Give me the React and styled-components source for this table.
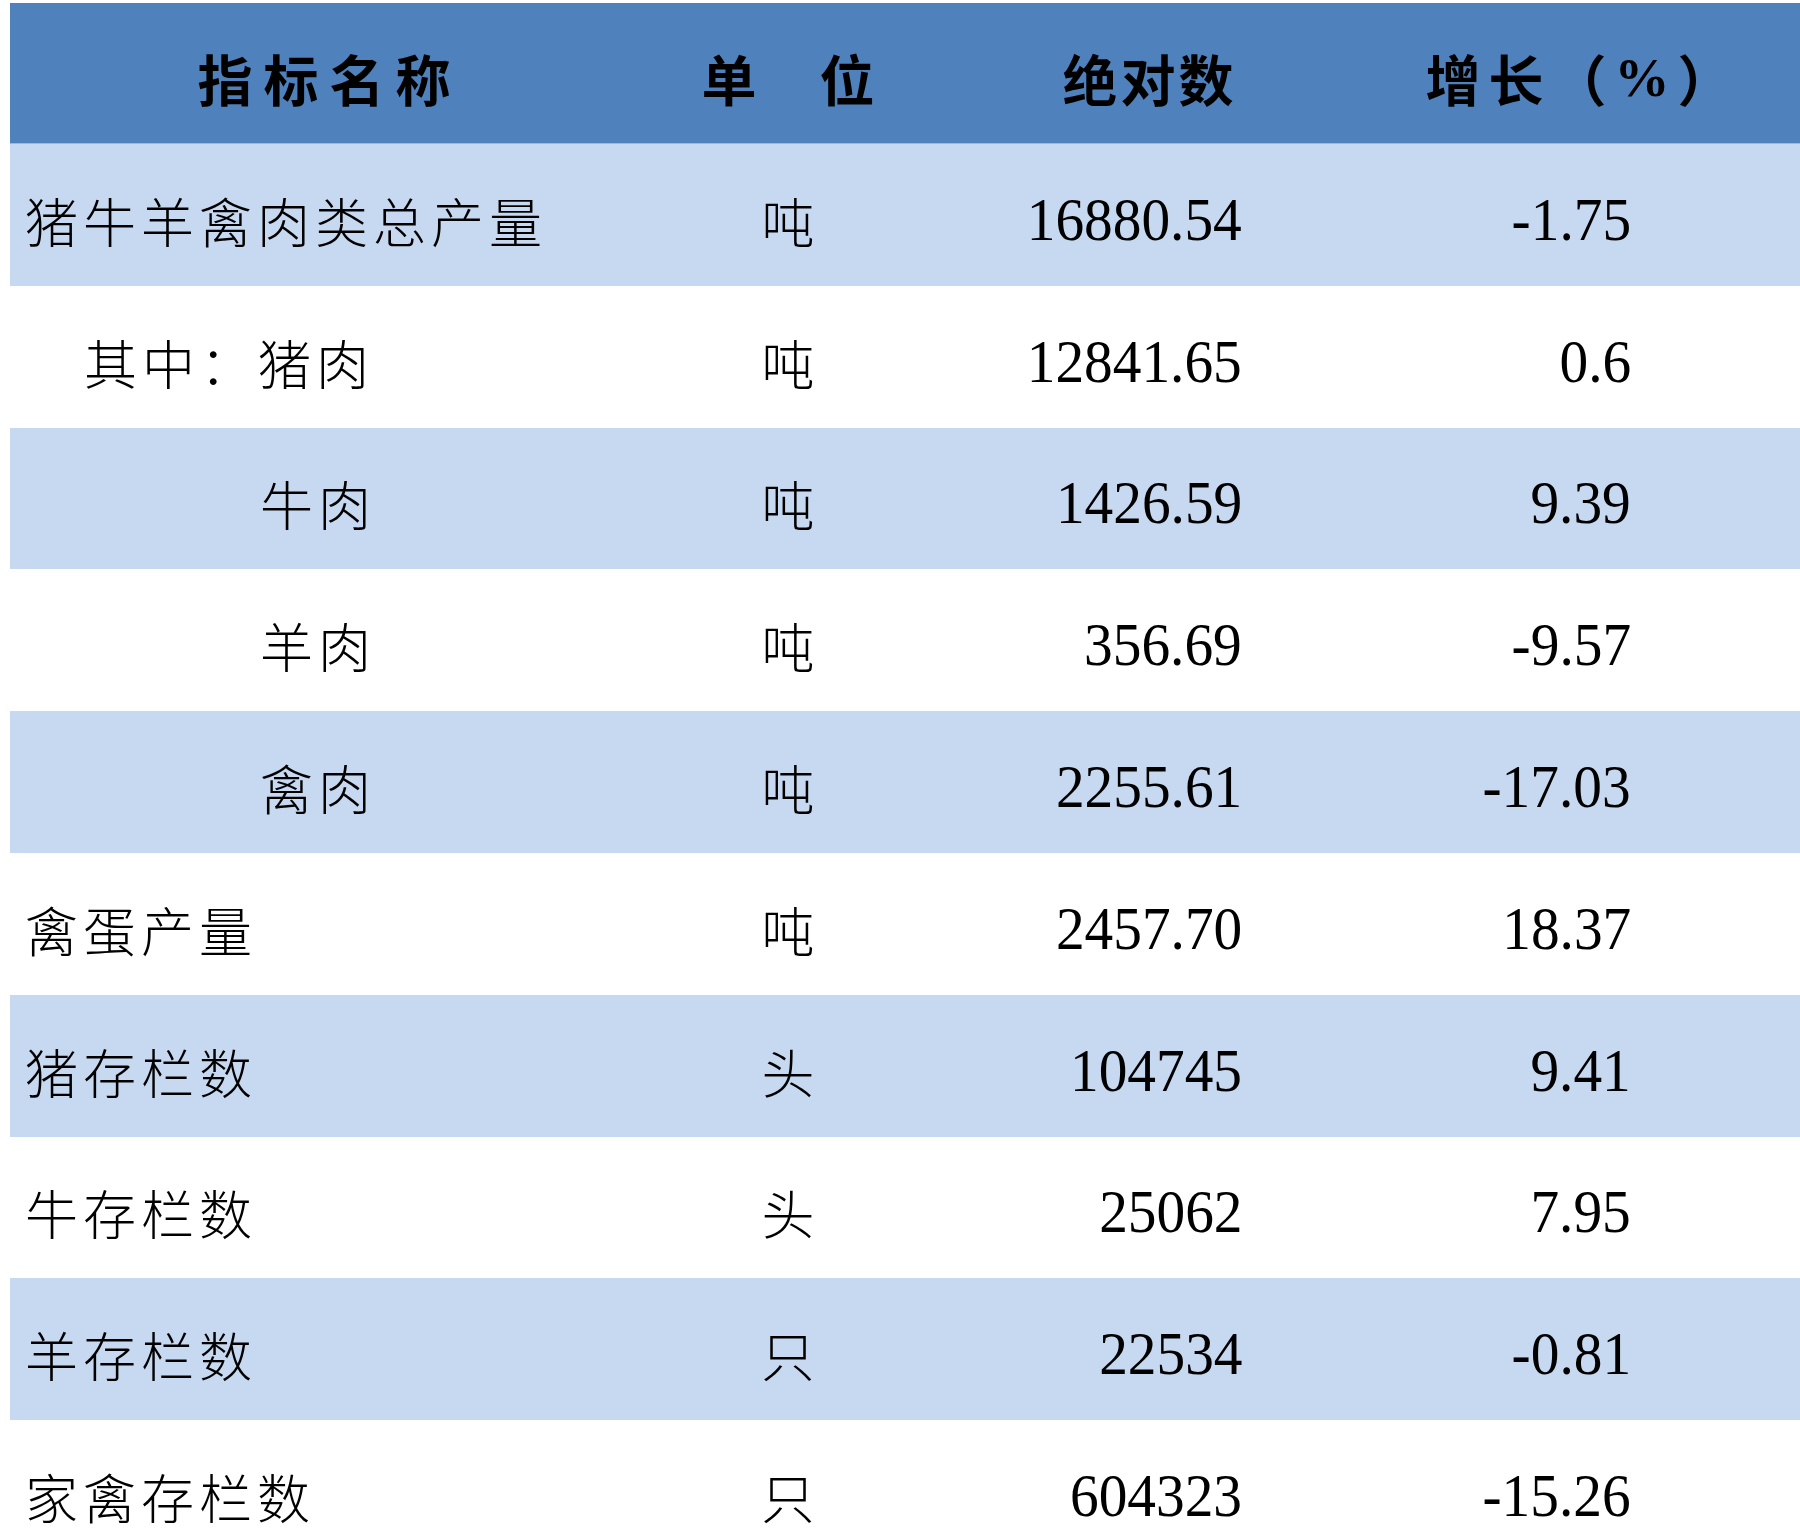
import React from "react";
import styled, { createGlobalStyle } from "styled-components";

const rows = [
  { name: "猪牛羊禽肉类总产量", unit: "吨", value: "16880.54", growth: "-1.75" },
  { name: "其中：猪肉", unit: "吨", value: "12841.65", growth: "0.6", indent: 74 },
  { name: "牛肉", unit: "吨", value: "1426.59", growth: "9.39", indent: 250 },
  { name: "羊肉", unit: "吨", value: "356.69", growth: "-9.57", indent: 250 },
  { name: "禽肉", unit: "吨", value: "2255.61", growth: "-17.03", indent: 250 },
  { name: "禽蛋产量", unit: "吨", value: "2457.70", growth: "18.37" },
  { name: "猪存栏数", unit: "头", value: "104745", growth: "9.41" },
  { name: "牛存栏数", unit: "头", value: "25062", growth: "7.95" },
  { name: "羊存栏数", unit: "只", value: "22534", growth: "-0.81" },
  { name: "家禽存栏数", unit: "只", value: "604323", growth: "-15.26" },
];

const GlobalStyle = createGlobalStyle`
  html, body {
    margin: 0;
    padding: 0;
    background: #ffffff;
  }
  body {
    overflow: hidden;
  }
`;

const Page = styled.div`
  width: 1800px;
  height: 1538px;
  padding: 3px 0 0 10px;
  box-sizing: border-box;
  overflow: hidden;
`;

const Table = styled.div`
  width: 1790px;
  display: flex;
  flex-direction: column;
`;

const cols = "628px 300px 420px 442px";

const HeaderRow = styled.div`
  display: grid;
  grid-template-columns: ${cols};
  height: 140px;
  background: #4f81bd;
  border-bottom: 1px solid #9ab8de;
`;

const HeadCell = styled.div`
  display: flex;
  align-items: center;
  justify-content: center;
  padding-top: 8px;
  padding-left: ${(p) => p.$spacing || 0}px;
  padding-right: ${(p) => p.$shift || 0}px;
  box-sizing: border-box;
  font-family: "Noto Sans CJK SC", "Liberation Serif", sans-serif;
  font-weight: 700;
  font-size: 55px;
  letter-spacing: ${(p) => p.$spacing || 0}px;
  color: #000;
`;

const Percent = styled.span`
  font-family: "Liberation Serif", serif;
  font-weight: 700;
`;

const Row = styled.div`
  display: grid;
  grid-template-columns: ${cols};
  height: 141.8px;
  background: ${(p) => (p.$band ? "#c6d9f1" : "#ffffff")};
`;

const NameCell = styled.div`
  display: flex;
  align-items: center;
  padding-top: 10px;
  padding-left: ${(p) => p.$indent}px;
  font-family: "Noto Sans CJK SC", sans-serif;
  font-weight: 300;
  font-size: 53px;
  letter-spacing: 5px;
  color: #000;
  white-space: nowrap;
`;

const UnitCell = styled.div`
  display: flex;
  align-items: center;
  justify-content: center;
  padding-top: 10px;
  font-family: "Noto Sans CJK SC", sans-serif;
  font-weight: 300;
  font-size: 53px;
  color: #000;
`;

const NumCell = styled.div`
  display: flex;
  align-items: center;
  justify-content: flex-end;
  padding-top: 10px;
  padding-right: ${(p) => p.$right}px;
`;

const Num = styled.span`
  display: inline-block;
  font-family: "Liberation Serif", "Times New Roman", serif;
  font-size: 61px;
  color: #000;
  transform: scaleX(0.94);
  transform-origin: right center;
`;

export default function App() {
  return (
    <>
      <GlobalStyle />
      <Page>
        <Table>
          <HeaderRow>
            <HeadCell $spacing={11}>指标名称</HeadCell>
            <HeadCell $spacing={4}>单　位</HeadCell>
            <HeadCell $spacing={3}>绝对数</HeadCell>
            <HeadCell $spacing={8} $shift={0}>
              增长（<Percent>%</Percent>）
            </HeadCell>
          </HeaderRow>
          {rows.map((r, i) => (
            <Row key={r.name} $band={i % 2 === 0}>
              <NameCell $indent={r.indent || 15}>{r.name}</NameCell>
              <UnitCell>{r.unit}</UnitCell>
              <NumCell $right={116}>
                <Num>{r.value}</Num>
              </NumCell>
              <NumCell $right={169}>
                <Num>{r.growth}</Num>
              </NumCell>
            </Row>
          ))}
        </Table>
      </Page>
    </>
  );
}
